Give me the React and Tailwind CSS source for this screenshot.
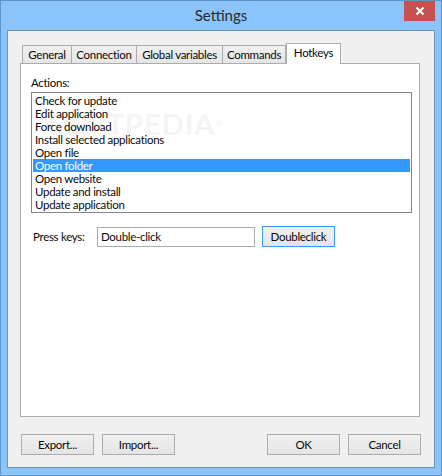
const font = { fontFamily: 'Lato, "Noto Sans", sans-serif' };
const txt = "text-[11.5px] tracking-[-0.3px] text-[#0a0a0a]";

function Tab({ label, className = "" }) {
  return (
    <div className={`h-[18px] mt-[2px] flex items-center justify-center bg-gradient-to-b from-[#f0f0f0] to-[#e5e5e5] border border-b-0 border-[#acacac] leading-none whitespace-nowrap ${txt} ${className}`}>
      {label}
    </div>
  );
}

function Btn({ label, className = "" }) {
  return (
    <div className={`w-[73px] h-[21px] flex items-center justify-center border border-[#acacac] bg-gradient-to-b from-[#f0f0f0] to-[#e5e5e5] leading-none ${txt} ${className}`}>
      {label}
    </div>
  );
}

const items = [
  "Check for update",
  "Edit application",
  "Force download",
  "Install selected applications",
  "Open file",
  "Open folder",
  "Open website",
  "Update and install",
  "Update application",
];

export default function App() {
  return (
    <div style={font} className="w-[442px] h-[476px] bg-[#8ac4fb] border border-[#5f94c4] flex flex-col overflow-hidden">
      <div className="h-[29px] shrink-0 flex items-start relative">
        <div className="w-full text-center text-[15px] leading-[28px] text-[#2a2a2a]">Settings</div>
        <div className="absolute right-[6px] top-0 w-[31px] h-[20px] bg-[#c75050] flex items-center justify-center">
          <svg width="10" height="10" viewBox="0 0 10 10">
            <path d="M1.5 1.5 L8.5 8.5 M8.5 1.5 L1.5 8.5" stroke="#fff" strokeWidth="2" />
          </svg>
        </div>
      </div>
      <div className="ml-[6px] mr-[6px] mb-[7px] flex-1 bg-[#f0f0f0] border border-[#6f93b5] flex flex-col pl-[12px] pr-[13px] pt-[12px] pb-[12px]">
        <div className="flex-1 flex flex-col mr-[1px]">
          <div className="flex pl-[2px] h-[21px] -mb-px relative z-10">
            <Tab label="General" className="w-[50px]" />
            <Tab label="Connection" className="w-[65px] border-l-0" />
            <Tab label="Global variables" className="w-[86px] border-l-0" />
            <Tab label="Commands" className="w-[63px] border-l-0" />
            <div className={`w-[55px] h-[21px] flex items-start pt-[3px] justify-center bg-white border border-b-0 border-[#acacac] leading-none ${txt}`}>
              Hotkeys
            </div>
          </div>
          <div className="flex-1 bg-white border border-[#acacac] pl-[10px] pr-[7px] pt-[11px] flex flex-col">
            <div className={`leading-[16px] ${txt}`}>Actions:</div>
            <div className="mt-[1px] h-[121px] border border-[#82878c] bg-white p-[1px] relative">
              <div className="absolute right-[187px] top-[16px] text-[29px] leading-[29px] tracking-[1px] font-bold text-[#f4f4f4] whitespace-nowrap">
                SOFTPEDIA<span className="text-[9px] align-top font-normal">®</span>
              </div>
              {items.map((t) => (
                <div
                  key={t}
                  className={`relative h-[13px] leading-[13px] pl-[2px] whitespace-nowrap ${txt} ${t === "Open folder" ? "bg-[#3399ff] !text-white" : ""}`}
                >
                  {t}
                </div>
              ))}
            </div>
            <div className="mt-[13px] flex items-end h-[21px] pl-[2px]">
              <div className={`w-[64px] self-center leading-none ${txt}`}>Press keys:</div>
              <div className={`w-[158px] h-[20px] border border-[#acacac] flex items-center pl-[3px] leading-none ${txt}`}>
                Double-click
              </div>
              <Btn label="Doubleclick" className="ml-[7px] !border-[#3c9cf5]" />
            </div>
          </div>
        </div>
        <div className="flex justify-between mt-[17px] pl-[1px]">
          <div className="flex gap-[8px]">
            <Btn label="Export..." />
            <Btn label="Import..." />
          </div>
          <div className="flex gap-[8px]">
            <Btn label="OK" />
            <Btn label="Cancel" />
          </div>
        </div>
      </div>
    </div>
  );
}
